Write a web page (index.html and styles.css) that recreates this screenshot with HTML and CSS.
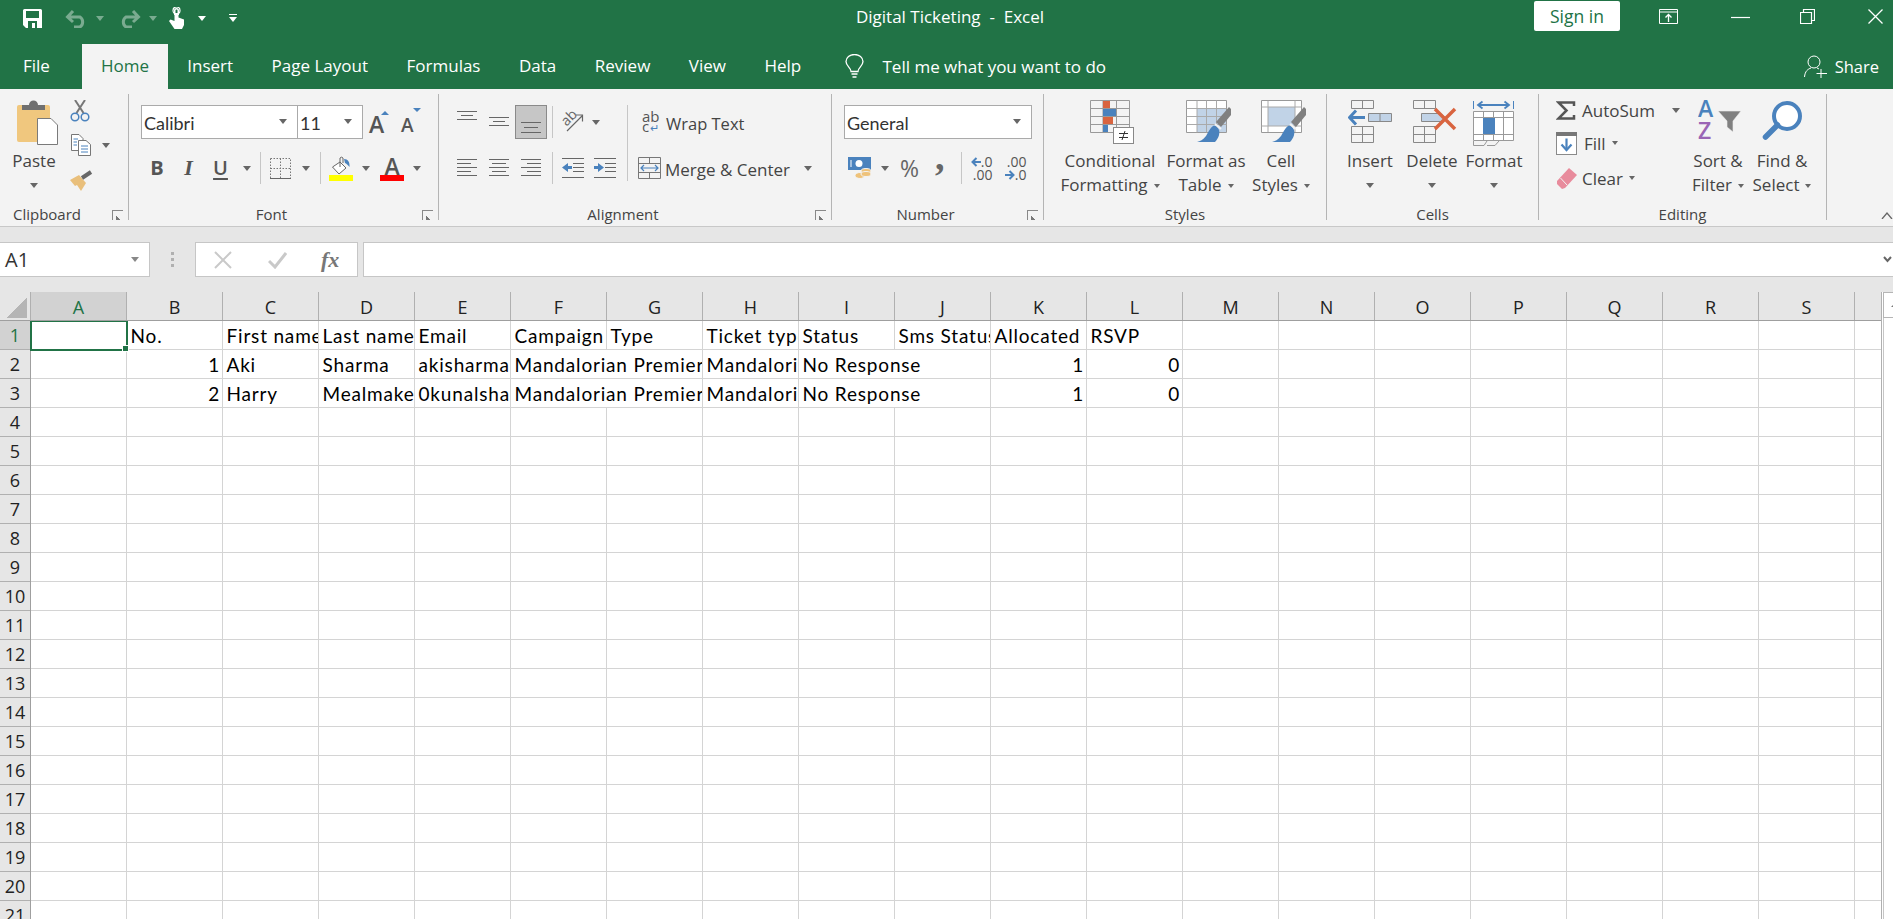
FILE: index.html
```html
<!DOCTYPE html>
<html lang="en">
<head>
<meta charset="utf-8">
<title>Digital Ticketing - Excel</title>
<link rel="stylesheet" href="styles.css">
</head>
<body>
<header class="titlebar">
  <div class="qat">
    <svg class="ml-23" width="19" height="19" viewBox="0 0 19 19"><path d="M0 1.5A1.5 1.5 0 0 1 1.5 0H17.5A1.5 1.5 0 0 1 19 1.5V19H3L0 16Z" fill="#fff"/><rect x="3" y="2" width="13" height="7" fill="#217346"/><rect x="5" y="12" width="9" height="7" fill="#217346"/><rect x="9" y="14" width="3" height="5" fill="#fff"/></svg>
    <svg class="ml-23 dim" width="23" height="20" viewBox="0 0 23 20"><path d="M3 9H15A6 6 0 0 1 15 19H9M8 3L2.500 9L8 14" fill="none" stroke="#fff" stroke-width="3"/></svg>
    <i class="caret light dim ml-8"></i>
    <svg class="ml-14 dim" width="23" height="20" viewBox="0 0 23 20"><path d="M20 9H8A6 6 0 0 0 8 19H14M15 3L20.500 9L15 14" fill="none" stroke="#fff" stroke-width="3"/></svg>
    <i class="caret light dim ml-8"></i>
    <svg class="ml-12" width="16" height="22" viewBox="0 0 16 22"><path d="M5 3.500A2.500 2.500 0 0 1 10 3.500V8H8.500V3.500A1 1 0 0 0 6.500 3.500V8H5Z" fill="#fff"/><circle cx="7.500" cy="3.500" r="3.500" fill="none" stroke="#fff" stroke-width="1.200"/><path d="M5.500 6H9.500V10.500L15 12.500V18L13 22H5.500L0 14L1.500 12.500L5.500 14Z" fill="#fff"/></svg>
    <i class="caret light ml-13"></i>
    <span class="customize ml-23"><b></b><i class="caret light"></i></span>
  </div>
  <div class="doc-title">Digital Ticketing&nbsp; -&nbsp; Excel</div>
  <div class="win-controls">
    <button class="signin">Sign in</button>
    <svg class="ml-39" width="19" height="15" viewBox="0 0 19 15"><path d="M.5.500H18.500V14.500H.5ZM.5 3H18.500" fill="none" stroke="#fff"/><path d="M9.500 13V6M6.500 8.500L9.500 5.500L12.500 8.500" fill="none" stroke="#fff" stroke-width="1.300"/></svg>
    <svg class="ml-53" width="19" height="15" viewBox="0 0 19 15"><path d="M0 8.500H19" stroke="#fff" stroke-width="1.200"/></svg>
    <svg class="ml-50" width="15" height="15" viewBox="0 0 15 15"><path d="M.5 3.500H11.500V14.500H.5ZM3.500 3.500V.5H14.500V11.500H11.500" fill="none" stroke="#fff" stroke-width="1.200"/></svg>
    <svg class="ml-53" width="15" height="15" viewBox="0 0 15 15"><path d="M.5.500L14.500 14.500M14.500.5L.5 14.500" stroke="#fff" stroke-width="1.300"/></svg>
  </div>
</header>

<nav class="tabs">
  <a class="tab tab-file">File</a>
  <a class="tab active">Home</a>
  <a class="tab">Insert</a>
  <a class="tab">Page Layout</a>
  <a class="tab">Formulas</a>
  <a class="tab">Data</a>
  <a class="tab">Review</a>
  <a class="tab">View</a>
  <a class="tab">Help</a>
  <div class="tell">
    <svg width="19" height="24" viewBox="0 0 19 24"><path d="M6 17.500C6 13.500 1 12 1 7.500A8.500 7 0 0 1 18 7.500C18 12 13 13.500 13 17.500Z" fill="none" stroke="#fff" stroke-width="1.300"/><path d="M6.500 20H12.500M7.500 23H11.500" stroke="#fff" stroke-width="1.300"/></svg>
    <span>Tell me what you want to do</span>
  </div>
  <div class="share">
    <svg width="23" height="23" viewBox="0 0 23 23"><circle cx="10" cy="7" r="6" fill="none" stroke="#fff"/><path d="M.5 22C1 16 4 14 7 13M13 13L15 14M17 14V23M12.500 18.500H23" fill="none" stroke="#fff"/></svg>
    <span>Share</span>
  </div>
</nav>

<section class="ribbon">
  <div class="group g-clipboard">
    <div class="group-body row-body pl-14">
      <div class="big w-40">
        <div class="big-icon">
          <svg class="ml-7" width="41" height="45" viewBox="0 0 41 45"><rect y="5" width="33" height="37" rx="2" fill="#f0c77e"/><path d="M5 5H12A4.500 4.500 0 0 1 21 5H28V10H5Z" fill="#6f6f6f"/><path d="M20.500 18.500H34L40.500 25V44.500H20.500Z" fill="#fff" stroke="#7a7a7a"/></svg>
        </div>
        <span>Paste</span>
        <span class="caret-line"><i class="caret"></i></span>
      </div>
      <div class="clip-tools">
        <svg width="20" height="22" viewBox="0 0 20 22"><path d="M5 0L13.500 13M15 0L6.500 13" stroke="#777" stroke-width="2"/><circle cx="5" cy="17" r="3.800" fill="none" stroke="#4a82bd" stroke-width="1.500"/><circle cx="15" cy="17" r="3.800" fill="none" stroke="#4a82bd" stroke-width="1.500"/></svg>
        <div class="copy-row">
          <svg width="20" height="22" viewBox="0 0 20 22"><path d="M.5.500H8L12 4.500V16.500H.5Z" fill="#fff" stroke="#777"/><path d="M7.500 6.500H15L19.500 10.500V21.500H7.500Z" fill="#fff" stroke="#777"/><path d="M2.500 5H7M2.500 8H6M2.500 11H6M10 12H17M10 15H17M10 18H17" stroke="#4a82bd"/></svg>
          <i class="caret ml-11"></i>
        </div>
        <svg width="24" height="21" viewBox="0 0 24 21"><path d="M0 10L9 5L16 13L11 21L7 15L5 16Z" fill="#e9bf7b"/><path d="M12 8L21 2" stroke="#666" stroke-width="4"/></svg>
      </div>
    </div>
    <div class="group-label lbl-clip">Clipboard<i class="launcher"></i></div>
  </div>

  <div class="group g-font">
    <div class="group-body col-body pl-12">
      <div class="ctl-row">
        <div class="select w-157"><span>Calibri</span><i class="caret"></i></div>
        <div class="select w-66 join"><span>11</span><i class="caret"></i></div>
        <span class="font-a grow">A<i class="tri up"></i></span>
        <span class="font-a shrink">A<i class="tri down"></i></span>
      </div>
      <div class="tool-row">
        <span class="fmt bold ml-9 w-14">B</span>
        <span class="fmt ital ml-18 w-13">I</span>
        <span class="fmt under ml-18 w-15">U</span>
        <i class="caret ml-15"></i>
        <i class="sep ml-9"></i>
        <svg class="ml-9" width="21" height="21" viewBox="0 0 21 21"><path d="M.5.500H20.500V20.500M.5.500V20.500M10.500.500V20.500M.5 10.500H20.500" fill="none" stroke="#777" stroke-dasharray="1.500 1.500"/><path d="M0 20.500H21" stroke="#666"/></svg>
        <i class="caret ml-11"></i>
        <i class="sep ml-10"></i>
        <span class="color-tool ml-8">
          <svg width="20" height="19" viewBox="0 0 20 19"><path d="M9 6L1.500 11L8 18L15 12Z" fill="#fff" stroke="#666"/><path d="M9 11V2A2 2 0 0 1 12 2V7" fill="none" stroke="#666"/><path d="M13 3C17 3 19 6 18.500 11C17 9 16 8 14 7Z" fill="#4a82bd"/></svg>
          <b class="bar yellow"></b>
        </span>
        <i class="caret ml-9"></i>
        <span class="color-tool ml-10"><span class="color-a">A</span><b class="bar red"></b></span>
        <i class="caret ml-9"></i>
      </div>
    </div>
    <div class="group-label lbl-launch">Font<i class="launcher"></i></div>
  </div>

  <div class="group g-align">
    <div class="group-body row-body pl-18">
      <div class="align-col">
        <div class="ctl-row">
          <svg width="20" height="34" viewBox="0 0 20 34"><path d="M0 6.500H20M4 10.500H16M0 14.500H20" stroke="#666"/></svg>
          <svg class="ml-12" width="20" height="34" viewBox="0 0 20 34"><path d="M0 12.500H20M4 16.500H16M0 20.500H20" stroke="#666"/></svg>
          <svg class="ml-6" width="32" height="34" viewBox="0 0 32 34"><rect x=".5" y=".5" width="31" height="33" fill="#c6c6c6" stroke="#8a8a8a"/><path d="M6 17.500H26M9 22.500H23M6 27.500H26" stroke="#666"/></svg>
          <i class="sep short ml-5"></i>
          <svg class="ml-9" width="22" height="22" viewBox="0 0 22 22"><text class="rot-text" x="1" y="13" transform="rotate(-45 6 10)">ab</text><path d="M5 20L20 5M14 4H20.500V10.500" fill="none" stroke="#666" stroke-width="1.200"/></svg>
          <i class="caret ml-8"></i>
        </div>
        <div class="tool-row">
          <svg width="20" height="22" viewBox="0 0 20 22"><path d="M0 2.500H20M0 6.500H14M0 10.500H20M0 14.500H14M0 18.500H20" stroke="#666"/></svg>
          <svg class="ml-12" width="20" height="22" viewBox="0 0 20 22"><path d="M0 2.500H20M3 6.500H17M0 10.500H20M3 14.500H17M0 18.500H20" stroke="#666"/></svg>
          <svg class="ml-12" width="20" height="22" viewBox="0 0 20 22"><path d="M0 2.500H20M6 6.500H20M0 10.500H20M6 14.500H20M0 18.500H20" stroke="#666"/></svg>
          <i class="sep ml-11"></i>
          <svg class="ml-9" width="22" height="22" viewBox="0 0 22 22"><path d="M0 1.500H22M11 6.500H22M11 10.500H22M11 14.500H22M0 20.500H22" stroke="#666"/><path d="M0 10.500L6 6V9H10V12H6V15Z" fill="#4a82bd"/></svg>
          <svg class="ml-10" width="22" height="22" viewBox="0 0 22 22"><path d="M0 1.500H22M11 6.500H22M11 10.500H22M11 14.500H22M0 20.500H22" stroke="#666"/><path d="M10 10.500L4 6V9H0V12H4V15Z" fill="#4a82bd"/></svg>
        </div>
      </div>
      <i class="sep tall ml-11"></i>
      <div class="wrap-col">
        <div class="ctl-row">
          <span class="wrap-icon"><span>ab</span><span>c<em>↵</em></span></span>
          <span class="wrap-text narrow ml-5">Wrap Text</span>
        </div>
        <div class="tool-row">
          <svg width="23" height="22" viewBox="0 0 23 22"><path d="M.5.500H22.500V21.500H.5ZM.5 6.500H22.500M.5 15.500H22.500M11.500.500V6.500M11.500 15.500V21.500" fill="none" stroke="#777"/><path d="M3 11H20M6 8L3 11L6 14M17 8L20 11L17 14" fill="none" stroke="#4a82bd" stroke-width="1.200"/></svg>
          <span class="wrap-text ml-4">Merge &amp; Center</span>
          <i class="caret ml-14"></i>
        </div>
      </div>
    </div>
    <div class="group-label lbl-launch">Alignment<i class="launcher"></i></div>
  </div>

  <div class="group g-number">
    <div class="group-body col-body pl-12">
      <div class="ctl-row">
        <div class="select w-188"><span>General</span><i class="caret"></i></div>
      </div>
      <div class="tool-row">
        <svg class="ml-4" width="24" height="22" viewBox="0 0 24 22"><rect width="23" height="13" fill="#4a82bd"/><circle cx="11" cy="6.500" r="3.500" fill="#fff"/><path d="M3 3V10" stroke="#fff"/><ellipse cx="12" cy="18.500" rx="5" ry="3" fill="#eec27a" stroke="#f3f3f3"/><ellipse cx="18" cy="14" rx="5" ry="2.500" fill="#eec27a" stroke="#f3f3f3"/><ellipse cx="18" cy="17" rx="5" ry="2.500" fill="#eec27a" stroke="#f3f3f3"/></svg>
        <i class="caret ml-9"></i>
        <span class="pct ml-11">%</span>
        <span class="comma ml-16">,</span>
        <i class="sep ml-16"></i>
        <span class="dec ml-9"><span><svg width="10" height="10" viewBox="0 0 10 10"><path d="M10 5H2M5.500 1L1.500 5L5.500 9" fill="none" stroke="#4a82bd" stroke-width="2"/></svg>.0</span><span>.00</span></span>
        <span class="dec ml-12"><span>.00</span><span><svg width="10" height="10" viewBox="0 0 10 10"><path d="M0 5H8M4.500 1L8.500 5L4.500 9" fill="none" stroke="#4a82bd" stroke-width="2"/></svg>.0</span></span>
      </div>
    </div>
    <div class="group-label lbl-launch">Number<i class="launcher"></i></div>
  </div>

  <div class="group g-styles">
    <div class="group-body row-body pl-14">
      <div class="big w-104">
        <div class="big-icon">
          <svg class="ml-4" width="44" height="44" viewBox="0 0 44 44"><path d="M.5.500H39.500V32.500H.5ZM.5 8.500H39.500M.5 16.500H39.500M.5 24.500H39.500M13 .5V32.500M26.500.500V32.500" fill="none" stroke="#999"/><path d="M13 1H20V8H13Z" fill="#d9643f"/><path d="M13 9H26V16H13Z" fill="#4a82bd"/><path d="M13 17H23V24H13Z" fill="#d9643f"/><path d="M13 25H18V32H13Z" fill="#4a82bd"/><rect x="23.500" y="27.500" width="20" height="16" fill="#fff" stroke="#888"/><path d="M29 33.500H38M29 37.500H38M35 31L32 40" stroke="#333"/></svg>
        </div>
        <span>Conditional</span>
        <span>Formatting<i class="caret tiny"></i></span>
      </div>
      <div class="big w-84 shift-2">
        <div class="big-icon">
          <svg class="ml-5" width="46" height="44" viewBox="0 0 46 44"><path d="M.5.500H40.500V32.500H.5Z" fill="#fff" stroke="#999"/><path d="M11 8H40V32H11Z" fill="#c1d3e7"/><path d="M.5 8.500H40.500M.5 16.500H40.500M.5 24.500H40.500M11 .5V32.500M20.500.500V32.500M30.500.500V32.500" fill="none" stroke="#aaa"/><path d="M30 22L43 7L45 9L45 15L35 27Z" fill="#808080"/><path d="M27 26C24 28 23 31 20 36C17 40 14 41 11 42H29C33 38 34 33 33 30C32 27 29 25 27 26Z" fill="#4a82bd"/><path d="M29 24L35 29" stroke="#f3f3f3" stroke-width="2"/></svg>
        </div>
        <span>Format as</span>
        <span>Table<i class="caret tiny"></i></span>
      </div>
      <div class="big w-66">
        <div class="big-icon">
          <svg class="ml-5" width="46" height="44" viewBox="0 0 46 44"><path d="M.5.500H40.500V32.500H.5Z" fill="#fff" stroke="#999"/><path d="M7 7H34V26H7Z" fill="#c1d3e7" stroke="#aaa"/><path d="M.5 7H7M34 7H40.500M.5 26H7M34 26H40.500M7 .5V7M34 .5V7M7 26V32M34 26V32" stroke="#aaa"/><path d="M30 22L43 7L45 9L45 15L35 27Z" fill="#808080"/><path d="M27 26C24 28 23 31 20 36C17 40 14 41 11 42H29C33 38 34 33 33 30C32 27 29 25 27 26Z" fill="#4a82bd"/><path d="M29 24L35 29" stroke="#f3f3f3" stroke-width="2"/></svg>
        </div>
        <span>Cell</span>
        <span>Styles<i class="caret tiny"></i></span>
      </div>
    </div>
    <div class="group-label">Styles</div>
  </div>

  <div class="group g-cells">
    <div class="group-body row-body pl-12">
      <div class="big w-62">
        <div class="big-icon">
          <svg width="44" height="44" viewBox="0 0 44 44"><path d="M3.500 .5H25.500V8.500H3.500ZM14.500 .5V8.500M3.500 26.500H25.500V42.500H3.500ZM14.500 26.500V42.500M3.500 34.500H25.500" fill="none" stroke="#888" stroke-width="1"/><path d="M20.500 13.500H43.500V21.500H20.500Z" fill="#c1d3e7" stroke="#888"/><path d="M32 13.500V21.500" stroke="#888"/><path d="M1 17.500H17" stroke="#4a82bd" stroke-width="3"/><path d="M8 10.500L1.500 17.500L8 24.500" fill="none" stroke="#4a82bd" stroke-width="3"/></svg>
        </div>
        <span>Insert</span>
        <span class="caret-line"><i class="caret"></i></span>
      </div>
      <div class="big w-62">
        <div class="big-icon">
          <svg class="ml-5" width="44" height="44" viewBox="0 0 44 44"><path d="M.5.500H22.500V8.500H.5ZM11.500 .5V8.500M.5 26.500H22.500V42.500H.5ZM11.500 26.500V42.500M.5 34.500H22.500" fill="none" stroke="#888"/><path d="M8.500 13.500H28L32 17.500L28 21.500H8.500Z" fill="#c1d3e7" stroke="#888"/><path d="M22 9L42 29M42 9L22 29" stroke="#d9643f" stroke-width="3.500"/></svg>
        </div>
        <span>Delete</span>
        <span class="caret-line"><i class="caret"></i></span>
      </div>
      <div class="big w-62">
        <div class="big-icon">
          <svg width="42" height="47" viewBox="0 0 42 47"><path d="M.5 1V9M40.500 1V9" stroke="#4a82bd"/><path d="M5 5H36M9.500 1.500L5 5L9.500 8.500M31.500 1.500L36 5L31.500 8.500" fill="none" stroke="#4a82bd" stroke-width="1.800"/><path d="M.5 11.500H40.500V40.500H.5ZM.5 17.500H40.500M.5 34.500H40.500M10.500 11.500V40.500M20.500 11.500V40.500M30.500 11.500V40.500" fill="#fff" stroke="#999"/><path d="M10 18H22V34H10Z" fill="#4a82bd"/><path d="M.5 41V45.500H11L14 41M14 45.500H22L26 41" fill="none" stroke="#999"/></svg>
        </div>
        <span>Format</span>
        <span class="caret-line"><i class="caret"></i></span>
      </div>
    </div>
    <div class="group-label">Cells</div>
  </div>

  <div class="group g-edit">
    <div class="group-body row-body pl-17">
      <div class="edit-col">
        <div class="edit-row r-auto">
          <svg width="20" height="19" viewBox="0 0 20 19"><path d="M18 5V1.500H2.500L10.500 9.500L2.500 17.500H18V14" fill="none" stroke="#555" stroke-width="2.500"/></svg>
          <span class="ml-6">AutoSum</span>
          <i class="caret ml-17"></i>
        </div>
        <div class="edit-row r-fill">
          <svg width="21" height="23" viewBox="0 0 21 23"><rect x=".5" y=".5" width="20" height="22" fill="#fff" stroke="#8a8a8a"/><rect width="21" height="4" fill="#777"/><path d="M10.500 6.500V18" stroke="#4a82bd" stroke-width="2.200"/><path d="M5.500 12.500L10.500 18L15.500 12.500" fill="none" stroke="#4a82bd" stroke-width="2.200"/></svg>
          <span class="ml-7">Fill</span>
          <i class="caret tiny"></i>
        </div>
        <div class="edit-row r-clear">
          <svg width="21" height="21" viewBox="0 0 21 21"><path d="M13 0L21 7L9 20L6 21L1 16L1 13Z" fill="#e88b9c"/><path d="M4.500 10L11 17" stroke="#f3f3f3"/></svg>
          <span class="ml-5">Clear</span>
          <i class="caret tiny"></i>
        </div>
      </div>
      <div class="big w-64">
        <div class="big-icon">
          <svg class="ml-4" width="44" height="40" viewBox="0 0 44 40"><text class="sort-a" x="0" y="17">A</text><text class="sort-z" x="0" y="39">Z</text><path d="M20 11H43L35 21V32L29 27V21Z" fill="#808080" stroke="#eee" stroke-width=".6"/></svg>
        </div>
        <span>Sort &amp;</span>
        <span>Filter<i class="caret tiny"></i></span>
      </div>
      <div class="big w-64">
        <div class="big-icon">
          <svg width="42" height="41" viewBox="0 0 42 41"><circle cx="26" cy="16" r="13" fill="#fff" stroke="#4a82bd" stroke-width="4"/><path d="M16.500 25L4.500 37" stroke="#4a82bd" stroke-width="5.500" stroke-linecap="round"/></svg>
        </div>
        <span>Find &amp;</span>
        <span>Select<i class="caret tiny"></i></span>
      </div>
    </div>
    <div class="group-label">Editing</div>
  </div>

  <svg class="collapse" width="12" height="8" viewBox="0 0 12 8"><path d="M1 8L6 2L11 8" fill="none" stroke="#666" stroke-width="1.300"/></svg>
</section>

<section class="formula-bar">
  <div class="name-box"><span>A1</span><i class="caret"></i></div>
  <div class="dots"><b></b><b></b><b></b></div>
  <div class="fx-box">
    <svg width="18" height="18" viewBox="0 0 18 18"><path d="M1 1L17 17M17 1L1 17" stroke="#c9c9c9" stroke-width="2"/></svg>
    <svg width="19" height="18" viewBox="0 0 19 18"><path d="M1 10L7 16L18 2" fill="none" stroke="#c9c9c9" stroke-width="3"/></svg>
    <span class="fx">fx</span>
  </div>
  <div class="formula-input"><svg width="9" height="7" viewBox="0 0 9 7"><path d="M1 1L4.500 5L8 1" fill="none" stroke="#666" stroke-width="2"/></svg></div>
</section>

<section class="sheet">
  <div class="sheet-main">
    <div class="col-heads">
      <div class="corner"><i></i></div>
      <div class="col-head selected">A</div><div class="col-head">B</div><div class="col-head">C</div><div class="col-head">D</div><div class="col-head">E</div><div class="col-head">F</div><div class="col-head">G</div><div class="col-head">H</div><div class="col-head">I</div><div class="col-head">J</div><div class="col-head">K</div><div class="col-head">L</div><div class="col-head">M</div><div class="col-head">N</div><div class="col-head">O</div><div class="col-head">P</div><div class="col-head">Q</div><div class="col-head">R</div><div class="col-head">S</div>
    </div>
    <div class="sheet-body">
      <div class="row-heads">
        <div class="row-head selected">1</div><div class="row-head">2</div><div class="row-head">3</div><div class="row-head">4</div><div class="row-head">5</div><div class="row-head">6</div><div class="row-head">7</div><div class="row-head">8</div><div class="row-head">9</div><div class="row-head">10</div><div class="row-head">11</div><div class="row-head">12</div><div class="row-head">13</div><div class="row-head">14</div><div class="row-head">15</div><div class="row-head">16</div><div class="row-head">17</div><div class="row-head">18</div><div class="row-head">19</div><div class="row-head">20</div><div class="row-head">21</div>
      </div>
      <div class="cells">
        <div class="cell-grid">
          <div class="cell"></div><div class="cell">No.</div><div class="cell">First name</div><div class="cell">Last name</div><div class="cell">Email</div><div class="cell">Campaign</div><div class="cell">Type</div><div class="cell">Ticket type</div><div class="cell">Status</div><div class="cell">Sms Status</div><div class="cell">Allocated</div><div class="cell">RSVP</div>
          <div class="cell"></div><div class="cell num">1</div><div class="cell">Aki</div><div class="cell">Sharma</div><div class="cell">akisharma@gmail.com</div><div class="cell span2">Mandalorian Premiere</div><div class="cell">Mandalorian Premiere</div><div class="cell span2">No Response</div><div class="cell num">1</div><div class="cell num">0</div>
          <div class="cell"></div><div class="cell num">2</div><div class="cell">Harry</div><div class="cell">Mealmaker</div><div class="cell">0kunalsharma@gmail.com</div><div class="cell span2">Mandalorian Premiere</div><div class="cell">Mandalorian Premiere</div><div class="cell span2">No Response</div><div class="cell num">1</div><div class="cell num">0</div>
        </div>
        <div class="cursor"><i></i></div>
      </div>
    </div>
  </div>
  <div class="scrollbar"><div class="scroll-up"><i></i></div></div>
</section>
</body>
</html>
```
FILE: styles.css
```css
* { box-sizing: border-box; }
html, body { margin: 0; height: 100%; overflow: hidden; }
body { font-family: "Open Sans", "Liberation Sans", sans-serif; font-size: 17px; color: #444; background: #fff; }
i, em { font-style: normal; }
svg { display: block; flex: none; }

.ml-4 { margin-left: 4px; } .ml-5 { margin-left: 5px; } .ml-6 { margin-left: 6px; } .ml-7 { margin-left: 7px; }
.ml-8 { margin-left: 8px; } .ml-9 { margin-left: 9px; } .ml-10 { margin-left: 10px; } .ml-11 { margin-left: 11px; }
.ml-12 { margin-left: 12px; } .ml-13 { margin-left: 13px; } .ml-14 { margin-left: 14px; } .ml-15 { margin-left: 15px; }
.ml-16 { margin-left: 16px; } .ml-17 { margin-left: 17px; } .ml-18 { margin-left: 18px; } .ml-23 { margin-left: 23px; } .ml-39 { margin-left: 39px; }
.ml-50 { margin-left: 50px; } .ml-53 { margin-left: 53px; }
.shift-2 { margin-left: 2px; }
.pl-12 { padding-left: 12px; } .pl-14 { padding-left: 14px; } .pl-17 { padding-left: 17px; } .pl-18 { padding-left: 18px; }
.w-13 { width: 13px; } .w-14 { width: 14px; } .w-15 { width: 15px; }
.w-40 { width: 40px; } .w-62 { width: 62px; } .w-64 { width: 64px; } .w-66 { width: 66px; }
.w-84 { width: 84px; } .w-104 { width: 104px; } .w-157 { width: 157px; } .w-188 { width: 188px; }

.caret { display: block; flex: none; width: 0; height: 0; border-left: 4px solid transparent; border-right: 4px solid transparent; border-top: 5px solid #666; }
.caret.light { border-top-color: #fff; }
.caret.tiny { display: inline-block; margin-left: 6px; vertical-align: 3px; border-left-width: 3.5px; border-right-width: 3.5px; border-top-width: 4px; }
.dim { opacity: .4; }

/* Title bar */
.titlebar { height: 44px; background: #217346; color: #fff; display: grid; grid-template-columns: 760px 380px 1fr; align-items: start; }
.qat { display: flex; align-items: center; height: 36px; }
.customize { display: flex; flex-direction: column; align-items: center; gap: 2px; }
.customize b { display: block; width: 8px; height: 1px; background: #fff; }
.doc-title { text-align: center; font-size: 17px; height: 34px; line-height: 34px; }
.win-controls { display: flex; justify-content: flex-end; align-items: center; padding-right: 10px; height: 32px; }
.signin { width: 86px; height: 30px; margin: 0; padding: 0; border: 0; border-radius: 2px; background: #fff; color: #217346; font: 17.500px "Open Sans", sans-serif; }

/* Tabs */
.tabs { height: 45px; background: #217346; color: #fff; display: flex; align-items: stretch; }
.tab { padding: 0 19.250px; line-height: 44px; font-size: 17px; }
.tab-file { padding: 0 34px 0 23px; width: 82px; }
.tab.active { background: #f3f3f3; color: #217346; padding: 0; width: 86px; text-align: center; }
.tell { display: flex; align-items: center; margin-left: 24px; gap: 19px; padding-bottom: 1px; }
.share { margin-left: auto; display: flex; align-items: center; gap: 8px; padding-right: 14px; font-size: 16.500px; }

/* Ribbon */
.ribbon { position: relative; height: 138px; padding-top: 5px; background: #f3f3f3; border-bottom: 1px solid #c8c8c8; display: flex; align-items: flex-start; }
.group { height: 126px; border-right: 1px solid #b4b4b4; display: flex; flex-direction: column; flex: none; }
.g-clipboard { width: 129px; } .g-font { width: 310px; } .g-align { width: 393px; } .g-number { width: 212px; }
.g-styles { width: 283px; } .g-cells { width: 212px; } .g-edit { width: 288px; }
.group-body { height: 112px; flex: none; }
.row-body { display: flex; align-items: flex-start; }
.col-body { display: flex; flex-direction: column; }
.group-label { position: relative; height: 14px; line-height: 16px; text-align: center; font-size: 15px; color: #444; }
.lbl-clip { padding-right: 34px; }
.lbl-launch { padding-right: 24px; }
.launcher { position: absolute; right: 5px; top: 4px; width: 11px; height: 10px; border-left: 1px solid #888; border-top: 1px solid #888; background: linear-gradient(45deg, #777 0 32%, transparent 32%) no-repeat right bottom / 7px 7px; }

.big { display: flex; flex-direction: column; align-items: center; flex: none; line-height: 24px; white-space: nowrap; padding-top: 4px; }
.big-icon { height: 51px; display: flex; align-items: flex-start; padding-top: 2px; }
.caret-line { height: 24px; display: flex; align-items: center; }

.clip-tools { margin-left: 16px; padding-top: 6px; display: flex; flex-direction: column; }
.copy-row { display: flex; align-items: center; margin: 12px 0 14px 1px; }

.ctl-row { display: flex; align-items: center; height: 34px; margin-top: 11px; flex: none; white-space: nowrap; }
.tool-row { display: flex; align-items: center; height: 26px; margin-top: 16px; flex: none; white-space: nowrap; }
.select { height: 34px; display: flex; align-items: center; justify-content: space-between; padding: 2px 10px 0 2px; background: #fff; border: 1px solid #aaa; color: #333; font-family: Lato, sans-serif; font-size: 18px; }
.select .caret { margin-top: -3px; }
.join { margin-left: -1px; }
.font-a { position: relative; color: #555; line-height: 34px; font-weight: 600; }
.grow { font-size: 23px; margin-left: 6px; width: 20px; padding-top: 3px; }
.shrink { font-size: 19px; margin-left: 12px; width: 20px; padding-top: 6px; }
.tri { position: absolute; width: 0; height: 0; border-left: 4px solid transparent; border-right: 4px solid transparent; }
.tri.up { left: 12px; top: 7px; border-bottom: 4px solid #4a82bd; }
.tri.down { left: 12px; top: 6px; border-top: 4px solid #4a82bd; }
.fmt { font-size: 20px; line-height: 26px; color: #555; text-align: center; flex: none; }
.bold { font-weight: 700; }
.ital { font-style: italic; font-weight: 600; font-family: "Liberation Serif", serif; font-size: 22px; }
.under { font-weight: 600; text-decoration: underline; text-underline-offset: 3px; }
.sep { display: block; flex: none; width: 1px; height: 32px; background: #c6c6c6; }
.sep.short { height: 32px; }
.sep.tall { height: 76px; margin-top: 11px; margin-bottom: 0; }
.color-tool { width: 24px; height: 25px; position: relative; display: flex; flex-direction: column; align-items: center; flex: none; }
.color-tool .bar { position: absolute; left: 0; right: 0; bottom: 0; height: 6px; }
.yellow { background: #ff0; } .red { background: #f00; }
.color-a { font-size: 23px; line-height: 21px; font-weight: 600; color: #555; }
.align-col { flex: none; }
.wrap-col { margin-left: 10px; }
.wrap-text { padding-top: 2px; }
.wrap-text.narrow { font-size: 16.500px; }
.wrap-icon { width: 23px; display: flex; flex-direction: column; align-items: flex-start; padding-left: 4px; line-height: 10px; font-size: 15px; color: #555; }
.wrap-icon em { color: #4a82bd; font-size: 11px; margin-left: 1px; }
.rot-text { font: 14px "Open Sans", sans-serif; fill: #666; }
.pct { font-size: 23px; color: #666; line-height: 26px; }
.comma { font-family: "Liberation Serif", serif; font-size: 38px; font-weight: 700; color: #666; line-height: 4px; height: 26px; }
.dec { display: flex; flex-direction: column; align-items: flex-end; width: 22px; font-size: 14px; line-height: 13px; color: #555; }
.dec span { display: flex; align-items: center; }
.edit-col { width: 130px; padding-top: 4px; flex: none; }
.edit-row { display: flex; align-items: center; white-space: nowrap; }
.r-auto { height: 24px; }
.r-fill { height: 42px; }
.r-clear { height: 28px; }
.sort-a { font: 600 23px "Open Sans", sans-serif; fill: #4a82bd; }
.sort-z { font: 600 23px "Open Sans", sans-serif; fill: #9a64b5; }
.collapse { position: absolute; right: 0; top: 122px; }

/* Formula bar */
.formula-bar { height: 65px; background: #e6e6e6; display: flex; align-items: flex-start; padding-top: 15px; }
.name-box { width: 150px; height: 35px; background: #fff; border: 1px solid #c6c6c6; border-left: 0; display: flex; align-items: center; justify-content: space-between; padding: 0 10px 0 5px; color: #333; font-size: 20px; }
.name-box .caret { border-top-color: #888; }
.dots { width: 45px; display: flex; flex-direction: column; align-items: center; gap: 3px; padding-top: 10px; }
.dots b { display: block; width: 3px; height: 3px; background: #b0b0b0; }
.fx-box { width: 163px; height: 35px; background: #fff; border: 1px solid #c6c6c6; display: flex; align-items: center; padding-left: 18px; gap: 36px; }
.fx { font: italic 600 22px "Liberation Serif", serif; color: #777; margin-left: -2px; }
.formula-input { margin-left: 5px; flex: 1; height: 35px; background: #fff; border: 1px solid #c6c6c6; border-right: 0; display: flex; align-items: center; justify-content: flex-end; padding-right: 1px; }

/* Sheet */
.sheet { height: 627px; display: flex; background: #fff; overflow: hidden; }
.sheet-main { width: 1882px; flex: none; border-right: 1px solid #b0b0b0; }
.col-heads { height: 29px; display: flex; background: #e6e6e6; border-bottom: 1px solid #9f9f9f; }
.corner { width: 31px; border-right: 1px solid #b0b0b0; padding: 5px 0 0 6px; flex: none; }
.corner i { display: block; width: 21px; height: 21px; background: linear-gradient(to bottom right, transparent 50%, #b5b5b5 50%); }
.col-head { width: 96px; flex: none; border-right: 1px solid #b0b0b0; text-align: center; font-size: 18px; line-height: 31px; color: #222; }
.col-head.selected { background: #d2d2d2; color: #217346; }
.sheet-body { display: flex; height: 598px; overflow: hidden; }
.row-heads { width: 31px; flex: none; background: #e6e6e6; border-right: 1px solid #9f9f9f; }
.row-head { height: 29px; border-bottom: 1px solid #b0b0b0; text-align: center; font-size: 18px; line-height: 29px; color: #222; }
.row-head.selected { background: #d2d2d2; color: #217346; }
.cells { position: relative; flex: 1; background-image: linear-gradient(to right, transparent 95px, #d4d4d4 95px), linear-gradient(to bottom, transparent 28px, #d4d4d4 28px); background-size: 96px 100%, 100% 29px; }
.cell-grid { display: grid; grid-template-columns: repeat(12, 96px); grid-auto-rows: 29px; }
.cell { margin: 0 1px 1px 0; padding: 0 0 0 3.500px; overflow: hidden; white-space: nowrap; font-family: Lato, sans-serif; font-size: 19px; letter-spacing: .82px; line-height: 29px; color: #000; }
.cell.span2 { grid-column: span 2; background: #fff; }
.cell.num { text-align: right; padding: 0 2px 0 0; }
.cursor { position: absolute; left: -1px; top: -1px; width: 98px; height: 31px; border: 2px solid #217346; }
.cursor i { position: absolute; right: -3px; bottom: -3px; width: 7px; height: 7px; background: #217346; border: 1px solid #fff; }
.scrollbar { flex: 1; margin-left: 1px; border-left: 1px solid #c6c6c6; background: #fff; }
.scroll-up { height: 26px; background: #fff; border: 1px solid #b5b5b5; margin-left: -1px; padding: 10px 0 0 7px; margin-top: 0; }
.scroll-up i { display: block; width: 0; height: 0; border-left: 4px solid transparent; border-right: 4px solid transparent; border-bottom: 4px solid #777; }
```
